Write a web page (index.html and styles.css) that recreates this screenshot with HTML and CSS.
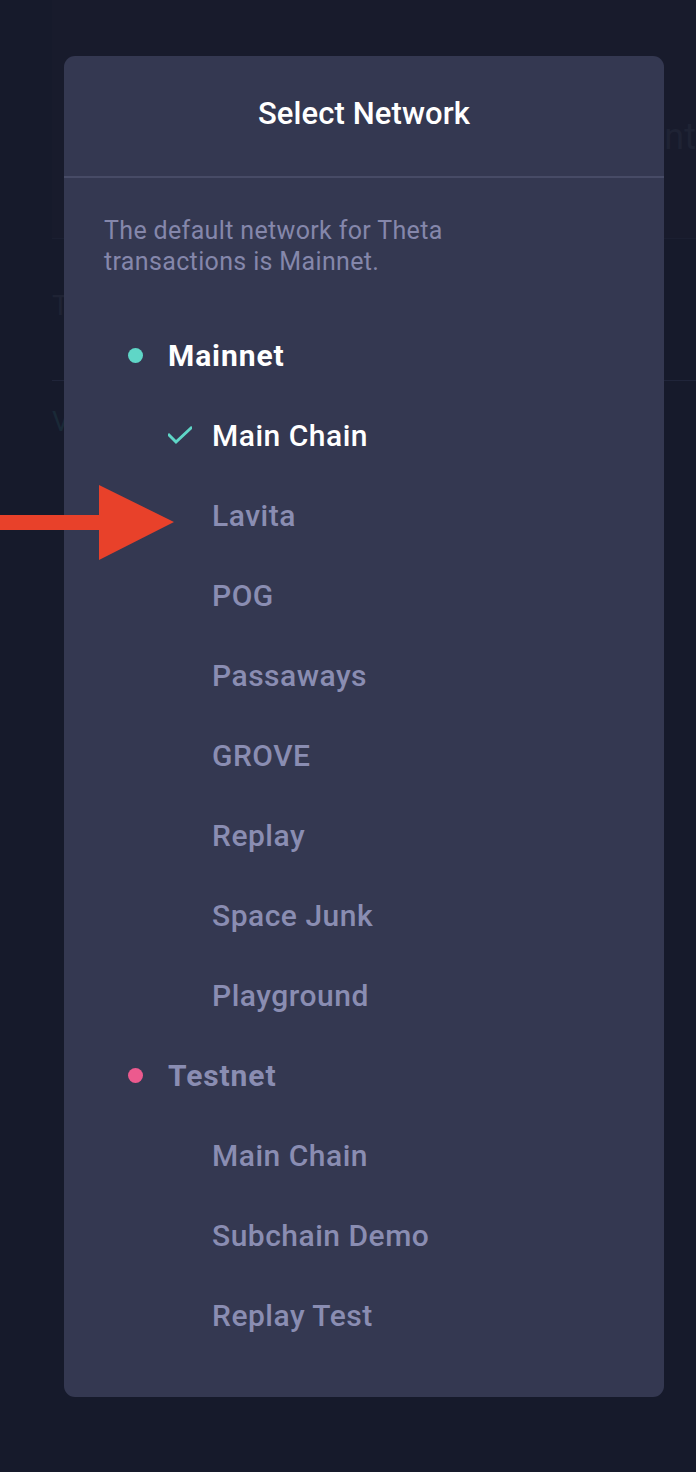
FILE: index.html
```html
<!DOCTYPE html>
<html lang="en">
<head>
<meta charset="utf-8">
<title>Select Network</title>
<link rel="stylesheet" href="styles.css">
</head>
<body>
<div class="bg-page">
  <div class="bg-header"><span class="bg-title">Account</span></div>
  <div class="bg-divider-top"></div>
  <div class="bg-row"><span class="bg-letter">T</span></div>
  <div class="bg-divider"></div>
  <div class="bg-row2"><span class="bg-letter teal">V</span></div>
</div>

<div class="modal">
  <div class="modal-header">
    <h1 class="modal-title">Select Network</h1>
  </div>
  <div class="modal-body">
    <p class="desc">The default network for Theta transactions is Mainnet.</p>

    <div class="group">
      <div class="group-head active"><span class="dot teal-dot"></span><span>Mainnet</span></div>
      <div class="item selected">
        <span class="check"><svg width="24" height="20" viewBox="0 0 24 20"><polyline points="1,10 8,17 23,3" fill="none" stroke="#5fd6c7" stroke-width="3" stroke-linecap="square"/></svg></span>
        <span>Main Chain</span>
      </div>
      <div class="item"><span class="check"></span><span>Lavita</span></div>
      <div class="item"><span class="check"></span><span>POG</span></div>
      <div class="item"><span class="check"></span><span>Passaways</span></div>
      <div class="item"><span class="check"></span><span>GROVE</span></div>
      <div class="item"><span class="check"></span><span>Replay</span></div>
      <div class="item"><span class="check"></span><span>Space Junk</span></div>
      <div class="item"><span class="check"></span><span>Playground</span></div>
    </div>

    <div class="group">
      <div class="group-head"><span class="dot pink-dot"></span><span>Testnet</span></div>
      <div class="item"><span class="check"></span><span>Main Chain</span></div>
      <div class="item"><span class="check"></span><span>Subchain Demo</span></div>
      <div class="item"><span class="check"></span><span>Replay Test</span></div>
    </div>
  </div>
</div>

<svg class="arrow" width="176" height="76" viewBox="0 0 176 76">
  <polygon points="0,30 99,30 99,0 174,37 99,75 99,45 0,45" fill="#e8412a"/>
</svg>
</body>
</html>
```

FILE: styles.css
```css
* { box-sizing: border-box; }
html, body {
  margin: 0;
  padding: 0;
}
body {
  width: 696px;
  height: 1472px;
  overflow: hidden;
  background: #161a2b;
  font-family: Roboto, "Liberation Sans", sans-serif;
  position: relative;
}

/* dimmed page behind the modal */
.bg-page {
  padding-left: 52px;
  color: #1f2334;
}
.bg-header {
  height: 238px;
  padding-top: 116px;
  display: flex;
  justify-content: flex-end;
  background: #181b2c;
}
.bg-title {
  font-size: 36px;
  line-height: 42px;
  white-space: nowrap;
}
.bg-divider-top { height: 1px; background: #1b1f31; }
.bg-row {
  height: 141px;
  padding-top: 52px;
}
.bg-letter {
  font-size: 28px;
  line-height: 30px;
}
.bg-letter.teal { color: #1a2937; }
.bg-divider { height: 1px; background: #20253a; }
.bg-row2 {
  padding-top: 26px;
}

/* modal */
.modal {
  position: absolute;
  left: 64px;
  top: 56px;
  width: 600px;
  height: 1341px;
  background: #343851;
  border-radius: 11px;
}
.modal-header {
  height: 122px;
  border-bottom: 2px solid #474b66;
  display: flex;
  align-items: center;
  justify-content: center;
}
.modal-title {
  margin: 0;
  padding-bottom: 5px;
  color: #ffffff;
  font-size: 31px;
  font-weight: 500;
  letter-spacing: 0.1px;
}
.modal-body {
  padding: 37px 40px 41px 40px;
}
.desc {
  margin: 0 0 38px 0;
  max-width: 370px;
  color: #8587ab;
  font-size: 25px;
  line-height: 31px;
  letter-spacing: 0.35px;
}
.group-head {
  height: 80px;
  display: flex;
  align-items: center;
  gap: 25px;
  padding-left: 24px;
  color: #8a8db2;
  font-size: 30px;
  font-weight: 700;
  letter-spacing: 0.9px;
}
.group-head.active { color: #ffffff; }
.dot {
  width: 15px;
  height: 15px;
  border-radius: 50%;
  flex: none;
}
.teal-dot { background: #5fd6c7; }
.pink-dot { background: #ec5a8e; }
.item {
  height: 80px;
  display: flex;
  align-items: center;
  gap: 20px;
  padding-left: 64px;
  color: #8a8db2;
  font-size: 30px;
  font-weight: 500;
  letter-spacing: 0.5px;
}
.item.selected { color: #ffffff; }
.check {
  width: 24px;
  height: 20px;
  flex: none;
  display: flex;
}

.arrow {
  position: absolute;
  left: 0;
  top: 485px;
}
```
